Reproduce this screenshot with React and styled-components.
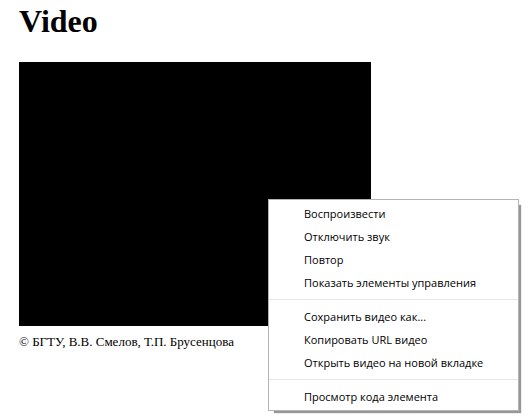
import React from "react";
import styled, { createGlobalStyle } from "styled-components";

const GlobalStyle = createGlobalStyle`
  body {
    margin: 0;
    background: #ffffff;
    color: #000000;
    font-family: "Liberation Serif", "Times New Roman", serif;
  }
`;

const Page = styled.main`
  position: relative;
  box-sizing: border-box;
  min-height: 100vh;
  padding: 3px 19px 0;
`;

const Title = styled.h1`
  margin: 0 0 22px;
  font-size: 32px;
  line-height: 37px;
  font-weight: 700;
`;

const Player = styled.video`
  display: block;
  width: 100%;
  max-width: 352px;
  aspect-ratio: 4 / 3;
  background: #000000;
`;

const Footer = styled.footer`
  margin-top: 8px;
  font-size: 13px;
  line-height: 16px;
`;

const Menu = styled.div`
  position: absolute;
  top: 199px;
  left: 268px;
  box-sizing: border-box;
  width: 251px;
  padding: 2px 0;
  border: 1px solid #b4b4b4;
  background: #ffffff;
  box-shadow: 4px 4px 1px -2px #979797;
`;

const MenuItem = styled.button`
  display: block;
  width: 100%;
  height: 23px;
  padding: 0 0 0 35px;
  border: 0;
  background: transparent;
  color: #000000;
  font-family: "Open Sans", "Noto Sans", sans-serif;
  font-size: 11px;
  line-height: 23px;
  text-align: left;
  white-space: nowrap;
`;

const Separator = styled.hr`
  height: 1px;
  margin: 5px 0;
  border: 0;
  background: #e5e5e5;
`;

const groups = [
  ["Воспроизвести", "Отключить звук", "Повтор", "Показать элементы управления"],
  ["Сохранить видео как...", "Копировать URL видео", "Открыть видео на новой вкладке"],
  ["Просмотр кода элемента"],
];

export default function App() {
  return (
    <>
      <GlobalStyle />
      <Page>
        <Title>Video</Title>
        <Player />
        <Footer>© БГТУ, В.В. Смелов, Т.П. Брусенцова</Footer>
        <Menu role="menu">
          {groups.map((group, index) => (
            <React.Fragment key={group[0]}>
              {index > 0 && <Separator />}
              {group.map((label) => (
                <MenuItem key={label} type="button" role="menuitem">
                  {label}
                </MenuItem>
              ))}
            </React.Fragment>
          ))}
        </Menu>
      </Page>
    </>
  );
}
